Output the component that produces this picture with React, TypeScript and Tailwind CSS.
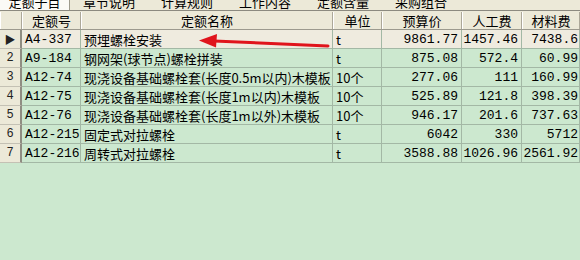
import React from 'react';

interface Row {
  code: string;
  name: string;
  unit: string;
  price: string;
  labor: string;
  material: string;
}

const rows: Row[] = [
  { code: 'A4-337', name: '预埋螺栓安装', unit: 't', price: '9861.77', labor: '1457.46', material: '7438.6' },
  { code: 'A9-184', name: '钢网架(球节点)螺栓拼装', unit: 't', price: '875.08', labor: '572.4', material: '60.99' },
  { code: 'A12-74', name: '现浇设备基础螺栓套(长度0.5m以内)木模板', unit: '10个', price: '277.06', labor: '111', material: '160.99' },
  { code: 'A12-75', name: '现浇设备基础螺栓套(长度1m以内)木模板', unit: '10个', price: '525.89', labor: '121.8', material: '398.39' },
  { code: 'A12-76', name: '现浇设备基础螺栓套(长度1m以外)木模板', unit: '10个', price: '946.17', labor: '201.6', material: '737.63' },
  { code: 'A12-215', name: '固定式对拉螺栓', unit: 't', price: '6042', labor: '330', material: '5712' },
  { code: 'A12-216', name: '周转式对拉螺栓', unit: 't', price: '3588.88', labor: '1026.96', material: '2561.92' },
];

const tabs = ['定额子目', '章节说明', '计算规则', '工作内容', '定额含量', '采购组合'];

const cols = 'grid grid-cols-[22px_59px_252px_49px_80px_60px_58px]';
const cjk = "font-['SimSun','Noto_Sans_CJK_SC',sans-serif]";
const mono = "font-['Liberation_Mono','Noto_Sans_CJK_SC',monospace]";

const HeadCell = ({ children }: { children?: React.ReactNode }) => (
  <div className="h-[17px] flex items-center justify-center border-l border-l-white border-r border-r-[#aca899] text-[13px] leading-none text-black">
    {children}
  </div>
);

export default function App() {
  return (
    <div className={`relative w-[580px] h-[260px] overflow-hidden bg-[#cce8cf] ${cjk}`}>
      {/* tab strip, cut off at the top */}
      <div className="h-[11px] overflow-hidden bg-[#ece9d8] border-b border-[#8c8a80]">
        <div className="flex -mt-[9px] h-[20px] text-[13px] leading-none">
          {tabs.map((t, i) => (
            <div
              key={t}
              className={`flex items-center justify-center h-full ${
                i === 0 ? 'w-[70px] bg-[#fbfaf6] border-r border-[#9d9a8c]' : 'w-[78px]'
              }`}
            >
              {t}
            </div>
          ))}
        </div>
      </div>
      <div className="h-[1px] bg-[#ece9d8]" />

      {/* header */}
      <div className={`${cols} bg-[#ece9d8] border-b border-[#9c9a8e]`}>
        <HeadCell />
        <HeadCell>定额号</HeadCell>
        <HeadCell>定额名称</HeadCell>
        <HeadCell>单位</HeadCell>
        <HeadCell>预算价</HeadCell>
        <HeadCell>人工费</HeadCell>
        <HeadCell>材料费</HeadCell>
      </div>

      {/* body */}
      {rows.map((r, i) => {
        const sel = i === 0;
        const cell = `h-[19px] flex items-center border-r border-b border-[#a3b8a5] text-[13px] leading-none ${
          sel ? 'bg-[#efebdf]' : 'bg-[#cce8cf]'
        }`;
        return (
          <div key={r.code} className={cols}>
            <div className="h-[19px] flex items-center justify-center bg-[#ece9d8] border-r-2 border-r-[#8f8d82] border-b border-b-[#c4c1b4] text-[12px] text-[#222]">
              {sel ? <span className="text-[11px]">▶</span> : <span className={mono}>{i + 1}</span>}
            </div>
            <div className={`${cell} pl-[3px] ${mono} text-[12px]`}>{r.code}</div>
            <div className={`${cell} pl-[3px] whitespace-nowrap overflow-hidden`}>{r.name}</div>
            <div className={`${cell} pl-[3px]`}>{r.unit}</div>
            <div className={`${cell} justify-end pr-[3px] ${mono} text-[11.5px]`}>{r.price}</div>
            <div className={`${cell} justify-end pr-[3px] ${mono} text-[11.5px]`}>{r.labor}</div>
            <div className={`${cell} justify-end pr-[1px] ${mono} text-[11.5px]`}>{r.material}</div>
          </div>
        );
      })}

      {/* red annotation arrow */}
      <svg className="absolute left-0 top-0 pointer-events-none" width="580" height="260">
        <line x1="328" y1="46" x2="214" y2="41" stroke="#e0141c" strokeWidth="3" strokeLinecap="round" />
        <polygon points="199,40.5 217,34 216,47.5" fill="#e0141c" />
      </svg>
    </div>
  );
}
